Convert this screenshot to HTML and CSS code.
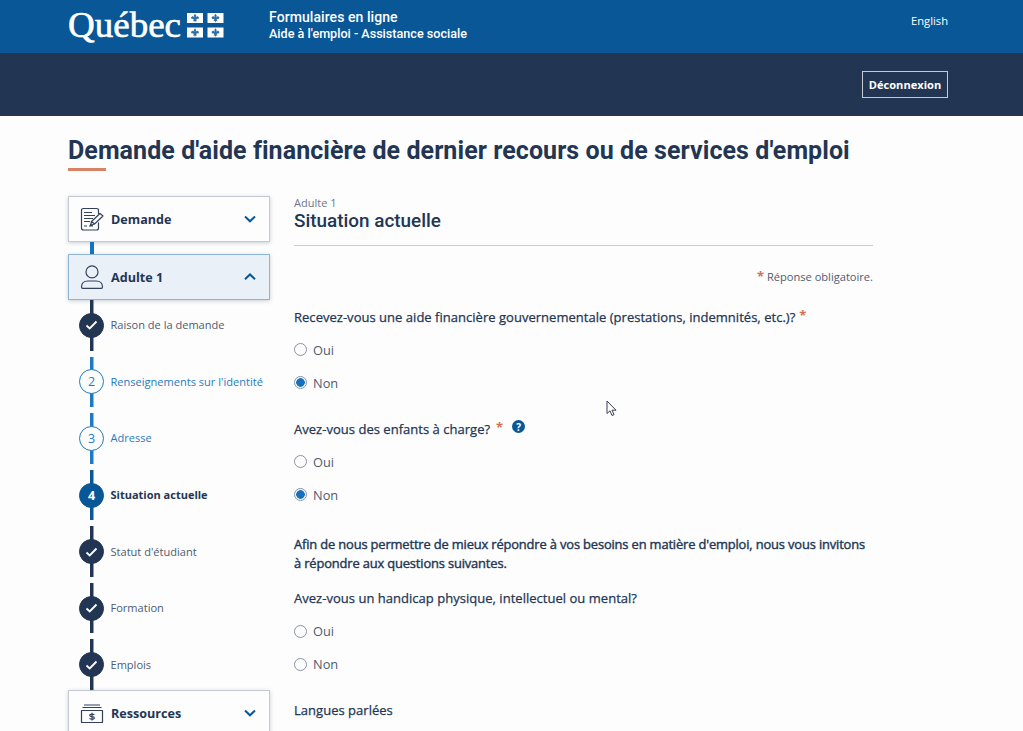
FILE: index.html
```
<!DOCTYPE html>
<html lang="fr">
<head>
<meta charset="utf-8">
<title>Demande d'aide financière de dernier recours</title>
<link rel="stylesheet" href="styles.css">
</head>
<body>
<svg class="defs" width="0" height="0">
  <defs>
    <g id="flag">
      <rect width="16" height="10" fill="#fff"/>
      <path d="M8 .8L9.200 2.600 8.700 4.600Q9.600 3 11 3.400Q12.800 4.300 11.400 6.100Q10.800 5.200 9.300 6.200V7L10 8.200 8.600 8 8 9.500 7.400 8 6 8.200 6.700 7V6.200Q5.200 5.200 4.600 6.100Q3.200 4.300 5 3.400Q6.400 3 7.300 4.600L6.800 2.600Z" fill="#095797" fill-opacity=".85"/>
    </g>
  </defs>
</svg>
<header class="top">
  <svg class="logo" width="157" height="45" viewBox="0 0 157 45">
    <text class="logo-text" x="0" y="37.300" textLength="113" lengthAdjust="spacingAndGlyphs">Québec</text>
    <use href="#flag" x="119" y="13"/><use href="#flag" x="139.500" y="13"/>
    <use href="#flag" x="119" y="27.500"/><use href="#flag" x="139.500" y="27.500"/>
  </svg>
  <div class="site">
    <div class="site-name">Formulaires en ligne</div>
    <div class="site-sub">Aide à l'emploi - Assistance sociale</div>
  </div>
  <a class="lang">English</a>
</header>
<div class="bar"><button class="logout">Déconnexion</button></div>
<h1 class="title"><span class="title-text">Demande d'aide financière de dernier recours ou de services d'emploi</span></h1>
<div class="columns">
  <nav class="side">
    <div class="card">
      <svg class="card-icon" width="24" height="24" viewBox="0 0 24 24"><path d="M18.500 7V3.500Q18.500 1.500 16.500 1.500H3.500Q1.500 1.500 1.500 3.500V21Q1.500 23 3.500 23H16.500Q18.500 23 18.500 21V15.500M4 5.500H12M4 8.500H15M4 11.500H13M4 14.500H10M4 19H7M10.500 18.500L11.500 14.500 20 6.500 23 9 14.500 17ZM11.500 14.500L14.500 17M9 19H13"/></svg>
      <span class="card-name">Demande</span>
      <svg class="chev" width="12" height="8" viewBox="0 0 12 8"><path d="M1 1.500L6 6.300 11 1.500"/></svg>
    </div>
    <div class="link"></div>
    <div class="card open">
      <svg class="card-icon" width="24" height="24" viewBox="0 0 24 24"><circle cx="12" cy="6.900" r="6"/><path d="M1.500 22Q1.500 16 8 16H16Q22.500 16 22.500 22Q22.500 23.300 21.300 23.300H2.700Q1.500 23.300 1.500 22Z"/></svg>
      <span class="card-name">Adulte 1</span>
      <svg class="chev" width="12" height="8" viewBox="0 0 12 8"><path d="M1 6.300L6 1.500 11 6.300"/></svg>
    </div>
    <ol class="steps">
      <li class="step done"><span class="track"><span class="dot"><svg width="13" height="10" viewBox="0 0 13 10"><path d="M1.500 5.500L4.700 8.500 11.500 1.500"/></svg></span></span><span class="label">Raison de la demande</span></li>
      <li class="step todo"><span class="track"><span class="dot">2</span></span><span class="label">Renseignements sur l'identité</span></li>
      <li class="step todo"><span class="track"><span class="dot">3</span></span><span class="label">Adresse</span></li>
      <li class="step now"><span class="track"><span class="dot">4</span></span><span class="label">Situation actuelle</span></li>
      <li class="step done"><span class="track"><span class="dot"><svg width="13" height="10" viewBox="0 0 13 10"><path d="M1.500 5.500L4.700 8.500 11.500 1.500"/></svg></span></span><span class="label">Statut d'étudiant</span></li>
      <li class="step done"><span class="track"><span class="dot"><svg width="13" height="10" viewBox="0 0 13 10"><path d="M1.500 5.500L4.700 8.500 11.500 1.500"/></svg></span></span><span class="label">Formation</span></li>
      <li class="step done"><span class="track"><span class="dot"><svg width="13" height="10" viewBox="0 0 13 10"><path d="M1.500 5.500L4.700 8.500 11.500 1.500"/></svg></span></span><span class="label">Emplois</span></li>
    </ol>
    <div class="card">
      <svg class="card-icon" width="24" height="24" viewBox="0 0 24 24"><path d="M4 4H20M2.500 6.500H21.500M1.500 9.500H22.500V21.500H1.500Z"/><path d="M14.300 13.800Q13.500 13.100 12 13.100Q9.800 13.100 9.800 14.400Q9.800 15.500 12 15.600Q14.300 15.800 14.300 17Q14.300 18.200 12 18.200Q10.300 18.200 9.500 17.400M12 11.700V19.500"/></svg>
      <span class="card-name">Ressources</span>
      <svg class="chev" width="12" height="8" viewBox="0 0 12 8"><path d="M1 1.500L6 6.300 11 1.500"/></svg>
    </div>
  </nav>
  <main class="main">
    <div class="kicker">Adulte 1</div>
    <h2 class="heading">Situation actuelle</h2>
    <div class="note"><span class="req">*</span> Réponse obligatoire.</div>
    <section class="group">
      <div class="question"><span>Recevez-vous une aide financière gouvernementale (prestations, indemnités, etc.)?</span><span class="req q-req">*</span></div>
      <label class="option"><span class="radio"></span>Oui</label>
      <label class="option"><span class="radio checked"></span>Non</label>
    </section>
    <section class="group">
      <div class="question"><span>Avez-vous des enfants à charge?</span><span class="req q-req wide">*</span><span class="help">?</span></div>
      <label class="option"><span class="radio"></span>Oui</label>
      <label class="option"><span class="radio checked"></span>Non</label>
    </section>
    <p class="intro">Afin de nous permettre de mieux répondre à vos besoins en matière d'emploi, nous vous invitons<br>à répondre aux questions suivantes.</p>
    <section class="group last">
      <div class="question"><span>Avez-vous un handicap physique, intellectuel ou mental?</span></div>
      <label class="option"><span class="radio"></span>Oui</label>
      <label class="option"><span class="radio"></span>Non</label>
    </section>
    <div class="question"><span>Langues parlées</span></div>
  </main>
</div>
<svg class="cursor" width="11" height="17" viewBox="0 0 11 17"><path d="M1 1V13.500L4 10.800 6 15.500 8 14.600 6 10.200H10Z"/></svg>
</body>
</html>
```
FILE: styles.css
```
* { box-sizing: border-box; }
html { height: 731px; overflow: hidden; }
body { margin: 0; height: 731px; overflow: hidden; background: #fdfdfd; color: #223654; font-family: "Open Sans", sans-serif; font-size: 13px; }
.defs { display: block; }
.top { display: flex; height: 53px; padding: 0 75px 0 68px; background: #095797; color: #fff; }
.logo { flex: none; overflow: visible; }
.logo-text { font: 35px "Liberation Serif", serif; fill: #fff; stroke: #fff; stroke-width: .6px; }
.site { margin: 9px 0 0 44px; font-family: Roboto, sans-serif; font-weight: 500; line-height: 16px; white-space: nowrap; }
.site-name { font-size: 14px; letter-spacing: .07px; }
.site-sub { font-size: 12.600px; line-height: 17px; }
.lang { margin: 13px 0 0 auto; font-size: 11.200px; line-height: 16px; }
.bar { display: flex; justify-content: flex-end; height: 63px; padding: 18px 75px 0 0; background: #223654; }
.logout { width: 86px; height: 27px; padding: 0; border: 1px solid #c5cad2; background: none; color: #fff; font: 700 11.100px "Open Sans", sans-serif; white-space: nowrap; }
.title { width: 800px; height: 80px; margin: 0; padding: 19px 0 0 68px; font: 700 25px/32px Roboto, sans-serif; letter-spacing: .07px; white-space: nowrap; }
.title::after { content: ""; display: block; width: 38px; height: 3px; margin-top: 1px; background: #d98366; }
.columns { display: flex; gap: 24px; padding-left: 68px; }
.side { width: 202px; flex: none; }
.card { display: flex; align-items: center; height: 46px; padding: 0 13px 0 11px; border: 1px solid #c5cad2; background: #fdfdfd; box-shadow: 0 1px 4px rgba(34, 54, 84, .24); font-size: 12.600px; font-weight: 700; }
.card.open { border-color: #8fb5d6; background: #e9f0f7; }
.card-icon { margin-right: 7px; fill: none; stroke: #33415f; stroke-width: 1.2; stroke-linejoin: round; }
.chev { margin-left: auto; fill: none; stroke: #095797; stroke-width: 2; }
.link { width: 4px; height: 12px; margin-left: 22px; background: #1472bf; }
.steps { display: flex; flex-direction: column; gap: 6px; margin: 0; padding: 0; height: 390px; list-style: none; }
.step { display: flex; align-items: center; flex: 1; gap: 6px; padding-left: 11px; font-size: 11.050px; color: #4d5b72; white-space: nowrap; }
.label { padding: 0 0 1px .5px; }
.track { display: flex; align-items: center; width: 25px; align-self: stretch; background: linear-gradient(currentColor, currentColor) 11px 0 / 3.500px 100% no-repeat; color: #223654; }
.dot { display: flex; align-items: center; justify-content: center; width: 25px; height: 25px; border: 1px solid currentColor; border-radius: 50%; background: #223654; font-size: 12.500px; font-weight: 500; }
.dot svg { fill: none; stroke: #fff; stroke-width: 1.8; }
.todo, .todo .track { color: #1f7bc1; }
.todo .dot { background: #fdfdfd; }
.now { color: #223654; font-weight: 700; font-size: 11px; }
.now .track { color: #095797; }
.now .dot { background: #095797; color: #fff; border-color: #095797; font-weight: 700; }
.main { width: 579px; color: #223654; white-space: nowrap; }
.kicker { font-size: 11px; line-height: 13px; color: #6b778a; }
.heading { height: 37px; margin: 0; border-bottom: 1px solid #c8cbd0; font: 500 18.900px/23px Roboto, sans-serif; }
.note { margin-top: 22px; height: 18px; text-align: right; font-size: 11.100px; line-height: 17px; color: #4d5b72; }
.req { color: #d2714f; font-size: 13px; font-weight: 700; line-height: 1; }
.group { margin-top: 22px; height: 90px; }
.question { display: flex; align-items: center; height: 18px; font-size: 13px; -webkit-text-stroke: .25px currentColor; letter-spacing: .025px; }
.q-req { margin: -3px 0 0 4px; -webkit-text-stroke: 0; }
.wide { margin-left: 6px; }
.help { display: flex; align-items: center; justify-content: center; width: 13px; height: 13px; margin: -4px 0 0 9px; border-radius: 50%; background: #095797; color: #fff; font-size: 10px; font-weight: 700; -webkit-text-stroke: 0; }
.note + .group { margin-top: 21.500px; }
.option { display: flex; align-items: center; height: 18px; margin-top: 15px; gap: 6px; color: #4d5b72; font-size: 12.800px; }
.radio { width: 13px; height: 13px; border: 1px solid #8893a2; border-radius: 50%; }
.checked { background: radial-gradient(circle, #1472bf 4px, transparent 4.600px); }
.intro { margin: 25.500px 0 0; line-height: 19px; font-size: 12.900px; letter-spacing: -.148px; -webkit-text-stroke: .4px currentColor; }
.group.last { margin-top: 16px; }
.last + .question { margin-top: 22px; }
.cursor { position: absolute; left: 606px; top: 399.500px; fill: #fff; stroke: #3c3c5c; stroke-width: 1; }
```
